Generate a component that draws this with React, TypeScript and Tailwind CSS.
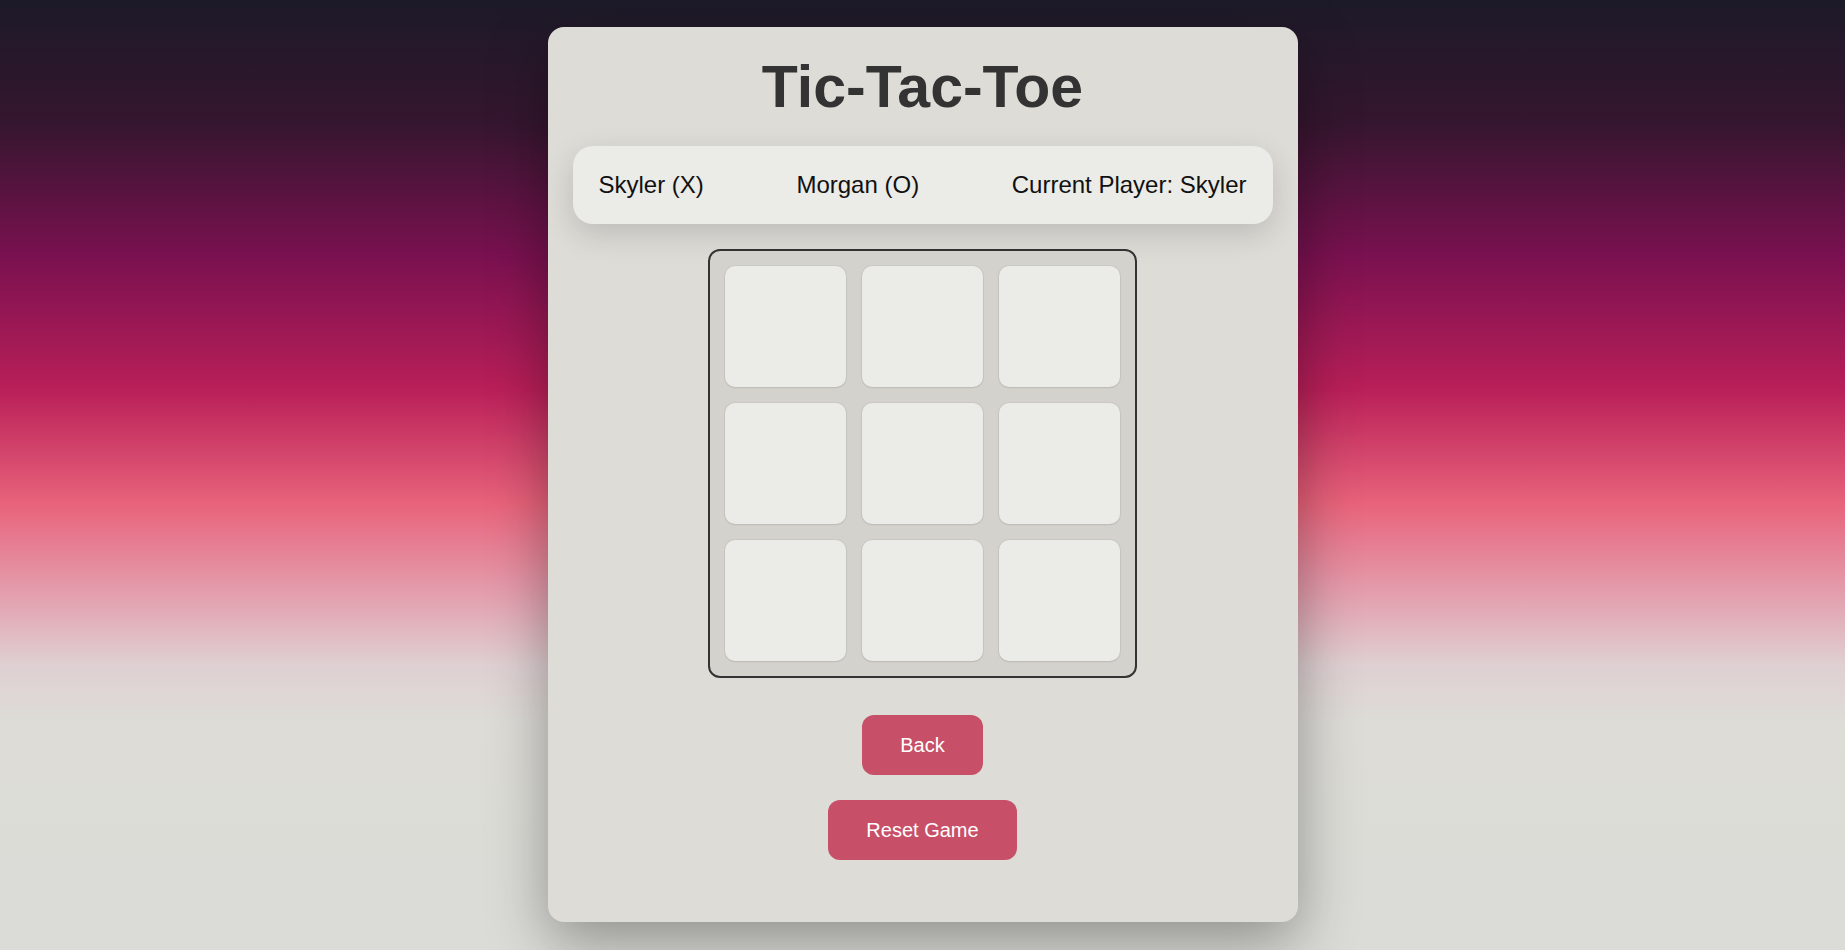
export default function App() {
  const players = ["Skyler (X)", "Morgan (O)", "Current Player: Skyler"];
  const cells = Array.from({ length: 9 });

  return (
    <div className="min-h-screen w-full pt-[27px] font-['Liberation_Sans',Arial,sans-serif] bg-[linear-gradient(180deg,#1c1a28_0%,#35162f_13%,#7a1150_27%,#b91f58_41%,#e8637b_53%,#e49bab_62%,#dfd0d2_70%,#dddcd7_76%,#dbdcd7_100%)]">
      <div className="mx-auto flex w-[750px] flex-col items-center rounded-2xl bg-[#dddcd7] px-[25px] pt-[25px] pb-[62px] shadow-[0_20px_60px_rgba(0,0,0,0.35)]">
        <h1 className="text-[59px] leading-[70px] font-bold text-[#333333]">Tic-Tac-Toe</h1>

        <div className="mt-[24px] flex h-[78px] w-full items-center justify-between rounded-[20px] bg-[#ebebe7] px-[26px] text-[24px] text-[#111111] shadow-[0_10px_30px_rgba(0,0,0,0.15)]">
          {players.map((p) => (
            <span key={p}>{p}</span>
          ))}
        </div>

        <div className="mt-[25px] grid grid-cols-[repeat(3,121px)] gap-[16px] rounded-[12px] border-2 border-[#333333] bg-[#d3d2cd] p-[15px]">
          {cells.map((_, i) => (
            <button
              key={i}
              className="h-[121px] w-[121px] rounded-[10px] bg-[#ebebe7] shadow-[0_0_0_1px_rgba(0,0,0,0.04),0_1px_2px_rgba(0,0,0,0.08)]"
            />
          ))}
        </div>

        <button className="mt-[37px] h-[60px] rounded-[12px] bg-[#c75068] px-[38px] text-[20px] text-white">
          Back
        </button>
        <button className="mt-[25px] h-[60px] rounded-[12px] bg-[#c75068] px-[38px] text-[20px] text-white">
          Reset Game
        </button>
      </div>
    </div>
  );
}
